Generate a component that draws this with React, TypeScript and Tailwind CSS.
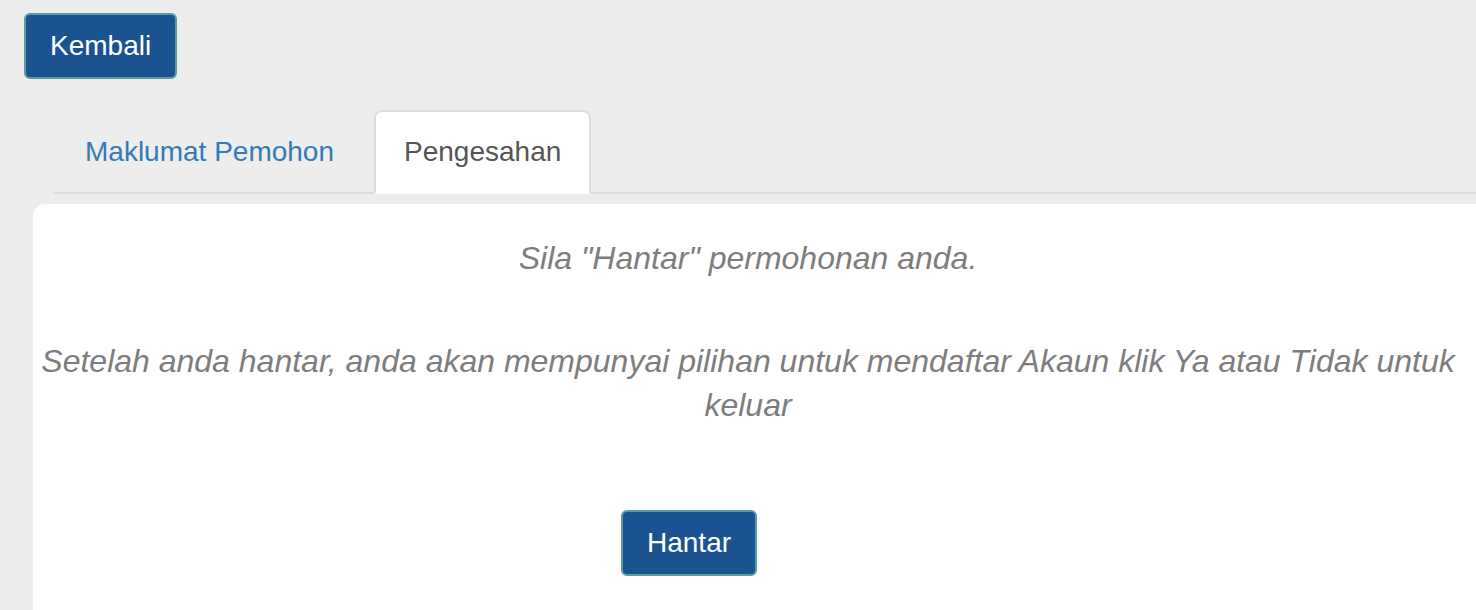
export default function App() {
  return (
    <div className="min-h-[610px] bg-[#ededed] font-['Liberation_Sans',Arial,sans-serif] overflow-hidden">
      <div className="pt-[13px] pl-[24px]">
        <button className="h-[66px] px-[24px] rounded-[6px] border-2 border-[#5b9ba0] bg-[#1b5391] text-white text-[28px] leading-[40px]">
          Kembali
        </button>
      </div>

      {/* Tabs */}
      <div className="mt-[31px] ml-[53px] flex border-b-2 border-[#dddddd]">
        <a className="mr-[8px] px-[30px] pt-[20px] pb-[18px] text-[28px] leading-[40px] text-[#337ab7] border-2 border-transparent">
          Maklumat Pemohon
        </a>
        <a className="-mb-[2px] px-[28px] pt-[20px] pb-[18px] text-[28px] leading-[40px] text-[#555555] bg-white border-2 border-[#dddddd] border-b-transparent rounded-t-[8px]">
          Pengesahan
        </a>
      </div>

      {/* Panel */}
      <div className="mt-[10px] ml-[33px] bg-white rounded-tl-[12px] min-h-[406px] pl-[7px] pr-[20px] pt-[32px]">
        <p className="text-center italic text-[32px] leading-[44px] text-[#7d7d7d]">
          Sila "Hantar" permohonan anda.
        </p>
        <p className="mt-[59px] text-center italic text-[32px] leading-[44px] text-[#7d7d7d]">
          Setelah anda hantar, anda akan mempunyai pilihan untuk mendaftar Akaun klik Ya atau Tidak untuk keluar
        </p>
        <div className="mt-[83px] pl-[581px]">
          <button className="h-[66px] px-[24px] rounded-[6px] border-2 border-[#5b9ba0] bg-[#1b5391] text-white text-[28px] leading-[40px]">
            Hantar
          </button>
        </div>
      </div>
    </div>
  )
}
